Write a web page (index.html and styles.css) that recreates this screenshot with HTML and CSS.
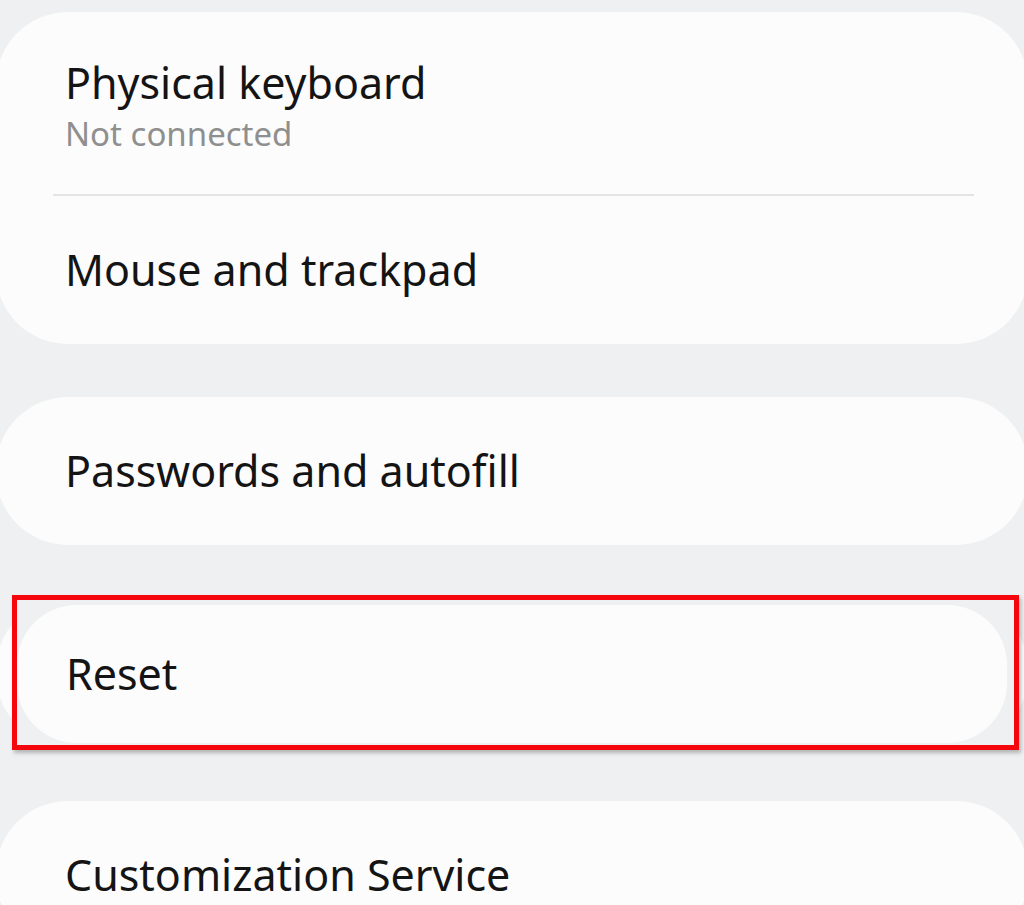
FILE: index.html
```html
<!DOCTYPE html>
<html lang="en">
<head>
    <meta charset="UTF-8">
    <meta name="viewport" content="width=device-width, initial-scale=1.0">

    <title>General management</title>

    <link rel="stylesheet" href="styles.css">

</head>

<body>

    <div class="settings-list">

        <div class="card">
            <div class="row row-tall">
                <div class="title">Physical keyboard</div>
                <div class="subtitle">Not connected</div>
            </div>
            <div class="divider"></div>
            <div class="row">
                <div class="title">Mouse and trackpad</div>
            </div>
        </div>

        <div class="card">
            <div class="row">
                <div class="title">Passwords and autofill</div>
            </div>
        </div>

        <!-- highlighted item -->
        <div class="card card-marked">
            <div class="row">
                <div class="title">Reset</div>
            </div>
            <div class="highlight">
                <div class="highlight-inner">
                    <div class="title">Reset</div>
                </div>
            </div>
        </div>

        <div class="card">
            <div class="row">
                <div class="title">Customization Service</div>
            </div>
        </div>

    </div>

</body>

</html>
```

FILE: styles.css
```css
body {
    margin: 0;
    background-color: #eef0f1;
    font-family: 'Noto Sans', sans-serif;
    color: #141414;
    overflow: hidden;
}

.settings-list {
    padding-top: 12px;
    margin: 0 -4px;
}

.card {
    position: relative;
    background-color: #fcfcfc;
    border-radius: 72px;
    margin-bottom: 53px;
}

.card-marked {
    margin-bottom: 55px;
}

.row {
    height: 148px;
    display: flex;
    flex-direction: column;
    justify-content: center;
    padding-left: 69px;
}

.row-tall {
    height: 182px;
    padding-top: 6px;
    box-sizing: border-box;
}

.title {
    font-size: 43px;
    line-height: 56px;
}

.subtitle {
    font-size: 33px;
    line-height: 46px;
    color: #8f8f8f;
}

.divider {
    height: 2px;
    background-color: #e3e4e5;
    margin: 0 54px 0 57px;
}

.highlight {
    position: absolute;
    left: 16px;
    top: -3px;
    right: 9px;
    bottom: -4px;
    border: 5px solid #f5060c;
    background-color: #eef0f1;
    box-shadow: 2px 3px 4px rgba(0, 0, 0, 0.25);
    padding: 5px 7px 2px 0;
}

.highlight-inner {
    height: 100%;
    background-color: #fcfcfc;
    border-radius: 60px;
    display: flex;
    align-items: center;
    padding-left: 49px;
    box-sizing: border-box;
}
```
